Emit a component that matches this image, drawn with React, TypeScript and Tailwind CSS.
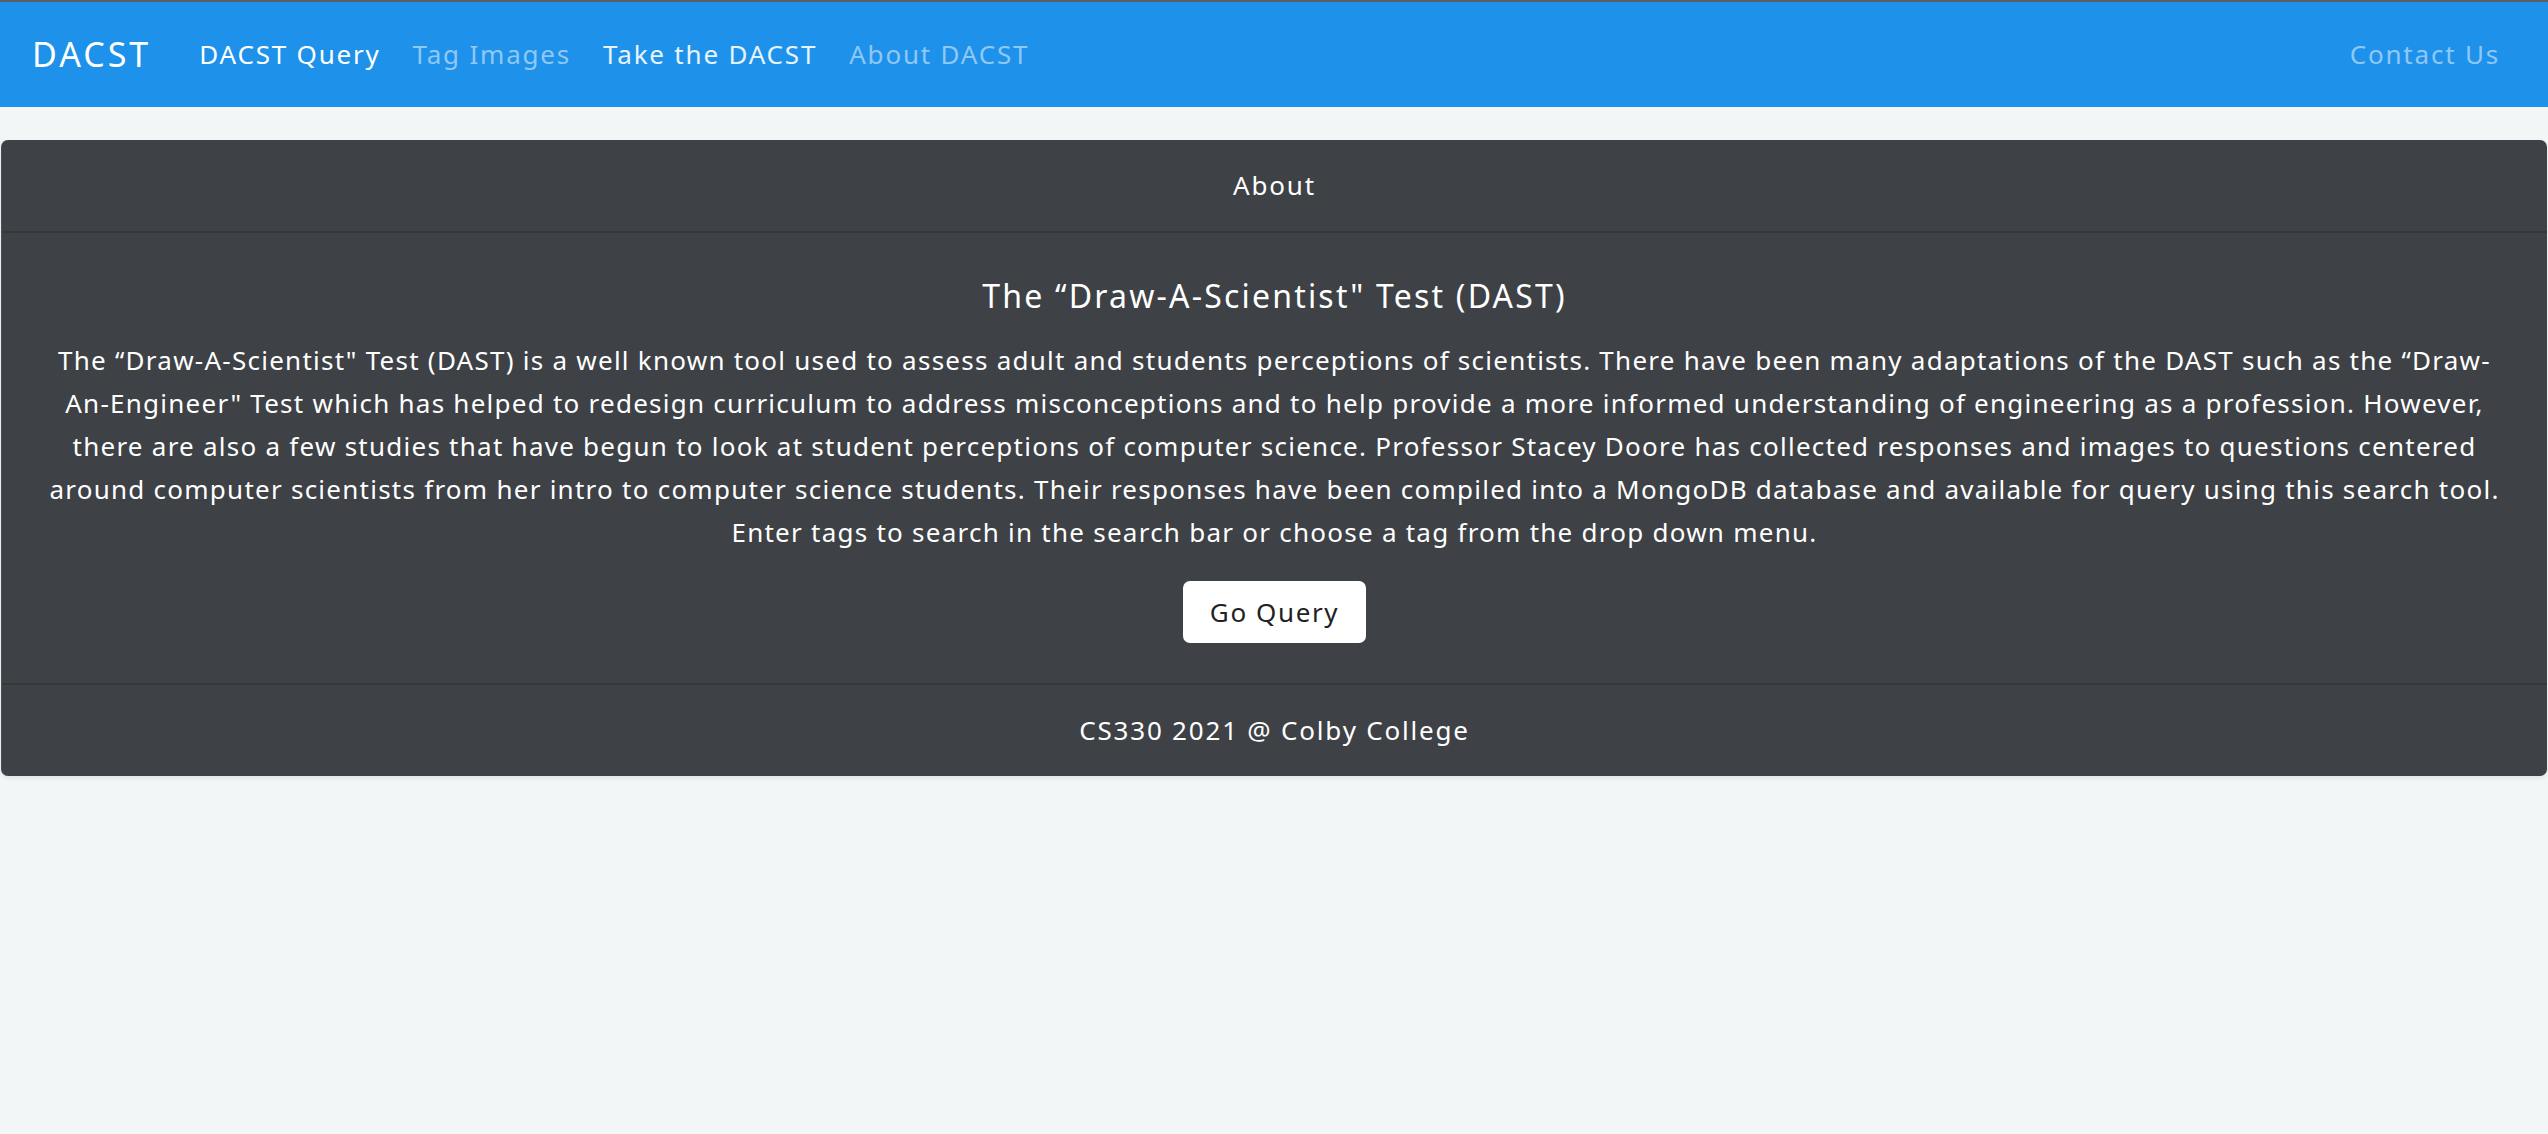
import React from "react";

export default function App() {
  const font = { fontFamily: '"Noto Sans", "Open Sans", sans-serif' };
  return (
    <div className="min-h-[1134px] bg-[#f2f6f7]" style={font}>
      <div className="h-[2px] bg-[#5b5f63]" />
      <nav className="flex h-[105px] items-center bg-[#1e91ea] px-[32px] tracking-[1.8px]">
        <span className="mr-[32px] text-[34px] tracking-[3px] text-white">DACST</span>
        <div className="flex items-center text-[26px]">
          <a className="px-[16px] text-white">DACST Query</a>
          <a className="px-[16px] text-white/50">Tag Images</a>
          <a className="px-[16px] text-white/90">Take the DACST</a>
          <a className="px-[16px] text-white/50">About DACST</a>
        </div>
        <a className="ml-auto pr-[16px] text-[26px] text-white/50">Contact Us</a>
      </nav>
      <div className="mx-[1px] mt-[33px] overflow-hidden rounded-[7px] border-l border-[#4a4d51] bg-[#3e4145] text-white shadow-[0_2px_4px_rgba(0,0,0,0.08)]">
        <div className="flex h-[93px] items-center justify-center border-b-[2px] border-[#35383b] text-[26px] tracking-[1.8px]">
          About
        </div>
        <div className="flex flex-col items-center px-[36px] pb-[40px] pt-[43px] text-center">
          <h5 className="mb-[23px] text-[32px] leading-[40px] tracking-[2.2px]">The “Draw-A-Scientist" Test (DAST)</h5>
          <p className="text-[26px] leading-[43px] tracking-[1.25px]">
            The “Draw-A-Scientist" Test (DAST) is a well known tool used to assess adult and students perceptions of scientists. There have been many adaptations of the DAST such as the “Draw-An-Engineer" Test which has helped to redesign curriculum to address misconceptions and to help provide a more informed understanding of engineering as a profession. However, there are also a few studies that have begun to look at student perceptions of computer science. Professor Stacey Doore has collected responses and images to questions centered around computer scientists from her intro to computer science students. Their responses have been compiled into a MongoDB database and available for query using this search tool. Enter tags to search in the search bar or choose a tag from the drop down menu.
          </p>
          <button className="mt-[27px] h-[62px] w-[183px] rounded-[7px] bg-white text-[26px] tracking-[1.6px] text-[#222]">
            Go Query
          </button>
        </div>
        <div className="flex h-[93px] items-center justify-center border-t-[2px] border-[#35383b] text-[26px] tracking-[1.8px]">
          CS330 2021 @ Colby College
        </div>
      </div>
    </div>
  );
}
